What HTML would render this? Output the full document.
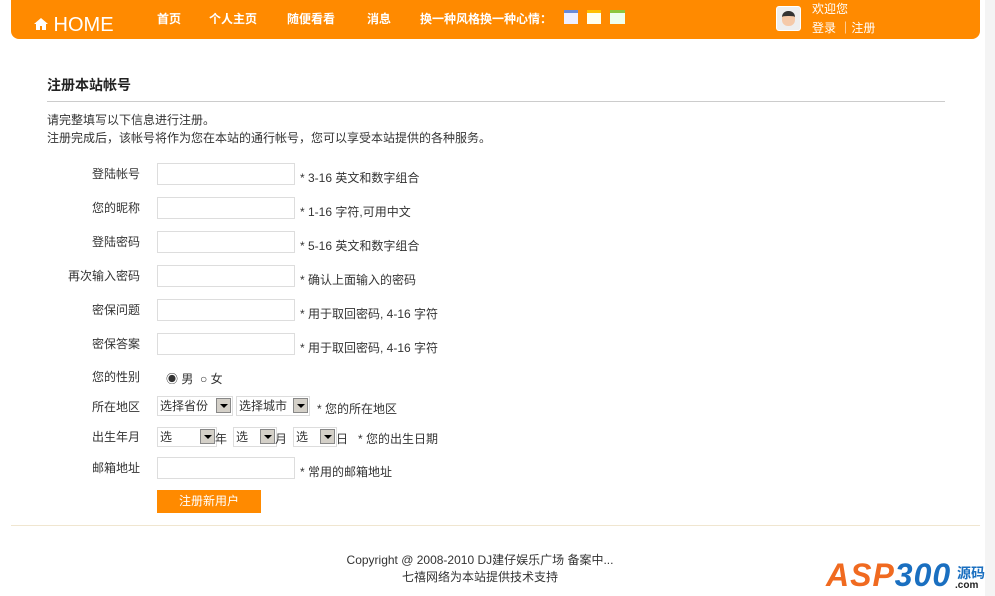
<!DOCTYPE html>
<html><head><meta charset="utf-8"><style>
body{margin:0;width:995px;height:596px;background:#fff;font-family:"Liberation Sans","Noto Sans CJK SC",sans-serif;font-size:12px;color:#333;position:relative;overflow:hidden}
.a{position:absolute;white-space:nowrap}
#hd{position:absolute;left:11px;top:0;width:969px;height:39px;background:#ff8a00;border-radius:0 0 8px 8px}
.nav{color:#fff;font-weight:bold;font-size:12px;top:10px}
.lb{width:90px;text-align:right;left:50px}
.in{position:absolute;left:157px;width:136px;height:20px;border:1px solid #ddd;background:#fff}
.ht{left:300px}
.sel{position:absolute;height:18px;border:1px solid #ddd;font-size:12px;line-height:18px;padding-left:2px;background:#fff}
.sel i{position:absolute;right:1px;top:1px;width:15px;height:15px;background:#d4d0c8;border:1px solid #888;box-sizing:border-box}
.sel i:after{content:"";position:absolute;left:3px;top:5px;border:4px solid transparent;border-top:4px solid #000;border-bottom:0}
</style></head><body>
<div id="hd"></div>
<div class="a" style="left:34px;top:14px;color:#fff;font-size:20px"><svg width="14" height="14" viewBox="0 0 14 14" style="vertical-align:0"><path d="M7 1L0 7h2v6h4V9h2v4h4V7h2z" fill="#fff"/></svg> HOME</div>
<div class="a nav" style="left:157px">首页</div>
<div class="a nav" style="left:209px">个人主页</div>
<div class="a nav" style="left:287px">随便看看</div>
<div class="a nav" style="left:367px">消息</div>
<div class="a nav" style="left:420px">换一种风格换一种心情：</div>
<div class="a" style="left:564px;top:10px;width:14px;height:14px;background:#eef;border-top:3px solid #6a8ad8;box-sizing:border-box"></div>
<div class="a" style="left:587px;top:10px;width:14px;height:14px;background:#ffe;border-top:3px solid #ffc000;box-sizing:border-box"></div>
<div class="a" style="left:610px;top:10px;width:15px;height:14px;background:#efe;border-top:3px solid #8cc63f;box-sizing:border-box"></div>
<div class="a" style="left:776px;top:6px;width:25px;height:25px;background:#eee;border-radius:3px;border:1px solid #fff;box-sizing:border-box"><div style="margin:4px auto;width:13px;height:15px;border-radius:6px;background:#f5c9a8;border-top:5px solid #333;box-sizing:border-box"></div></div>
<div class="a" style="left:812px;top:0;color:#fff">欢迎您</div>
<div class="a" style="left:812px;top:19px;color:#fff">登录 ｜注册</div>

<div class="a" style="left:47px;top:75px;font-weight:bold;font-size:14px;color:#222">注册本站帐号</div>
<div class="a" style="left:47px;top:101px;width:898px;border-top:1px solid #ccc"></div>
<div class="a" style="left:47px;top:111px;line-height:18px">请完整填写以下信息进行注册。<br>注册完成后，该帐号将作为您在本站的通行帐号，您可以享受本站提供的各种服务。</div>

<div class="a lb" style="top:165px">登陆帐号</div><div class="in" style="top:163px"></div><div class="a ht" style="top:169px">* 3-16 英文和数字组合</div>
<div class="a lb" style="top:199px">您的昵称</div><div class="in" style="top:197px"></div><div class="a ht" style="top:203px">* 1-16 字符,可用中文</div>
<div class="a lb" style="top:233px">登陆密码</div><div class="in" style="top:231px"></div><div class="a ht" style="top:237px">* 5-16 英文和数字组合</div>
<div class="a lb" style="top:267px">再次输入密码</div><div class="in" style="top:265px"></div><div class="a ht" style="top:271px">* 确认上面输入的密码</div>
<div class="a lb" style="top:301px">密保问题</div><div class="in" style="top:299px"></div><div class="a ht" style="top:305px">* 用于取回密码, 4-16 字符</div>
<div class="a lb" style="top:335px">密保答案</div><div class="in" style="top:333px"></div><div class="a ht" style="top:339px">* 用于取回密码, 4-16 字符</div>
<div class="a lb" style="top:368px">您的性别</div>
<div class="a" style="left:166px;top:370px">◉ 男 &nbsp;○ 女</div>
<div class="a lb" style="top:398px">所在地区</div>
<div class="sel" style="left:157px;top:396px;width:72px">选择省份<i></i></div>
<div class="sel" style="left:236px;top:396px;width:70px">选择城市<i></i></div>
<div class="a" style="left:317px;top:400px">* 您的所在地区</div>
<div class="a lb" style="top:428px">出生年月</div>
<div class="sel" style="left:157px;top:427px;width:56px">选<i></i></div><div class="a" style="left:215px;top:430px">年</div>
<div class="sel" style="left:233px;top:427px;width:40px">选<i></i></div><div class="a" style="left:275px;top:430px">月</div>
<div class="sel" style="left:293px;top:427px;width:40px">选<i></i></div><div class="a" style="left:336px;top:430px">日</div>
<div class="a" style="left:358px;top:430px">* 您的出生日期</div>
<div class="a lb" style="top:459px">邮箱地址</div><div class="in" style="top:457px"></div><div class="a ht" style="top:463px">* 常用的邮箱地址</div>
<div class="a" style="left:157px;top:490px;width:104px;height:23px;background:#ff8a00;color:#fff;text-align:center;line-height:22px">注册新用户</div>

<div class="a" style="left:11px;top:525px;width:969px;border-top:1px solid #f0e6d0"></div>
<div class="a" style="left:0;width:960px;text-align:center;top:552px;line-height:17px">Copyright @ 2008-2010 DJ建仔娱乐广场 备案中...<br>七禧网络为本站提供技术支持</div>
<div class="a" style="left:826px;top:557px;font-size:32px;font-weight:bold;font-style:italic;color:#f06a20;letter-spacing:1px">ASP<span style="color:#1a6fc0">300</span></div>
<div class="a" style="left:957px;top:563px;font-size:14px;font-weight:bold;color:#1a6fc0">源码</div>
<div class="a" style="left:955px;top:580px;font-size:10px;font-weight:bold;color:#222">.com</div>
<div class="a" style="left:985px;top:0;width:10px;height:596px;background:#f4f4f4"></div>
</body></html>
